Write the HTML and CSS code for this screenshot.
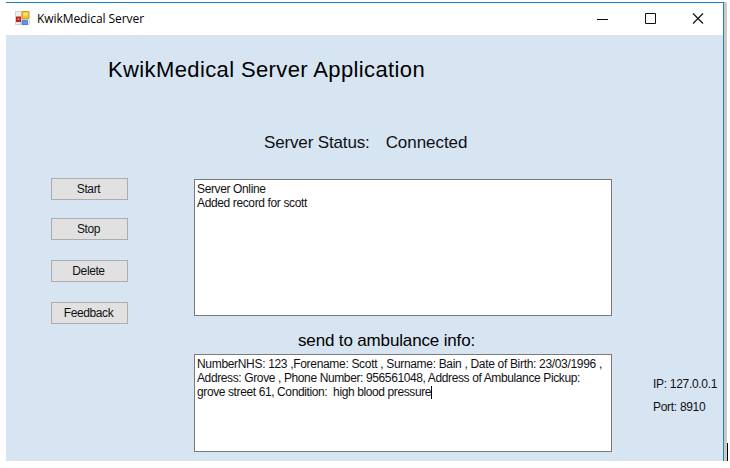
FILE: index.html
```
<!DOCTYPE html>
<html lang="en">
<head>
<meta charset="utf-8">
<title>KwikMedical Server</title>
<link rel="stylesheet" href="styles.css">
</head>
<body>
<div class="desktop">
  <main class="window">
    <header class="titlebar">
      <svg class="app-icon" width="15" height="15" viewBox="0 0 15 15">
        <path d="M.5 .5h6v13h-6z" fill="#f0f0f0" stroke="#cfcfcf"/>
        <path d="M5.5 8.5h9v5h-9z" fill="#edf1f8" stroke="#d0d4dc"/>
        <path d="M1 5.5h5v5.500h-5z" fill="#c5221c"/>
        <path d="M2.800 7.500h1.400v1.400h-1.400z" fill="#f7b5a8"/>
        <path d="M7 .5h7v7h-7z" fill="#f8c52c" stroke="#cf9a1d"/>
        <path d="M8.500 2h4v2.500h-4z" fill="#ffe479"/>
        <path d="M7 9.500h5.500v4h-5.500z" fill="#5b97ee" stroke="#3c74cf" stroke-width=".8"/>
      </svg>
      <span class="caption">KwikMedical Server</span>
      <svg class="controls" width="110" height="14" viewBox="0 0 110 14" fill="none" stroke="#111">
        <path d="M0 8.5h11M48.500 2.500h10v10h-10z"/>
        <path d="M96 2.500l10 10M106 2.500l-10 10" stroke-width="1.2"/>
      </svg>
    </header>
    <div class="content">
      <h1>KwikMedical Server Application</h1>
      <div class="columns">
        <nav class="actions">
          <button>Start</button>
          <button>Stop</button>
          <button>Delete</button>
          <button>Feedback</button>
        </nav>
        <section class="panels">
          <div class="status"><span>Server Status:</span><span class="state">Connected</span></div>
          <div class="box log"><div>Server Online</div><div>Added record for scott</div></div>
          <h2>send to ambulance info:</h2>
          <div class="box info"><div class="patient">NumberNHS: 123 ,Forename: Scott , Surname: Bain , Date of Birth: 23/03/1996 ,</div><div class="address">Address: Grove , Phone Number: 956561048, Address of Ambulance Pickup:</div><div class="condition">grove street 61, Condition:&nbsp; high blood pressure<i class="caret"></i></div></div>
        </section>
        <aside class="network"><div>IP: 127.0.0.1</div><div>Port: 8910</div></aside>
      </div>
    </div>
  </main>
  <div class="edge"><i class="cursor"></i></div>
</div>
</body>
</html>
```
FILE: styles.css
```
* { box-sizing: border-box; }
body { margin: 0; background: #fff; color: #101114; font: 12px/14px "Liberation Sans", Arial, sans-serif; overflow: hidden; }
.desktop { display: flex; width: 728px; height: 461px; padding: 2px 0 0 6px; }
.window { width: 718px; background: #d7e4f2; border-top: 1px solid #1b80d0; border-right: 1px solid #2482cd; white-space: nowrap; }
.titlebar { display: flex; align-items: center; height: 32px; padding: 0 17px 0 9px; background: #fff; }
.app-icon { margin-top: -1px; }
.caption { margin-left: 7px; font: 12px/16px "Open Sans", sans-serif; letter-spacing: -.07px; color: #000; }
.controls { margin: -2px -1px 0 auto; }
h1, h2 { margin: 0; font-weight: 400; color: #000; }
h1 { padding: 21px 0 0 102px; font-size: 22px; line-height: 28px; letter-spacing: .38px; }
.columns { display: flex; }
.actions { display: flex; flex-direction: column; width: 188px; padding: 94px 0 0 45px; }
button { width: 77px; height: 22px; margin: 0 0 20px; padding: 0 2px 0 0; border: 1px solid #adadad; background: #e1e1e1; color: #101114; font: inherit; letter-spacing: -.4px; }
button:first-child { margin-bottom: 18px; }
.panels { width: 418px; }
.status { display: flex; height: 95px; padding: 49px 0 0 70px; font-size: 17px; line-height: 20px; letter-spacing: -.15px; }
.state { margin-left: 16px; letter-spacing: -.05px; }
.box { border: 1px solid #7a7a7a; background: #fff; padding: 2px; letter-spacing: -.37px; }
.log { height: 137px; }
h2 { height: 38px; padding: 15px 0 0 104px; font-size: 17px; line-height: 20px; letter-spacing: -.15px; }
.info { height: 98px; }
.patient { letter-spacing: -.32px; }
.address { letter-spacing: -.38px; }
.condition { letter-spacing: -.39px; }
.caret { display: inline-block; width: 1px; height: 13px; margin-bottom: -3px; background: #000; }
.network { padding: 289px 0 0 41px; line-height: 23px; letter-spacing: -.3px; }
.edge { display: flex; align-items: flex-end; justify-content: flex-end; width: 4px; background: linear-gradient(to right, #c8c6c5, #d0cecd 75%, #fff 75%); }
.cursor { width: 1px; height: 18px; background: #000; }
```
